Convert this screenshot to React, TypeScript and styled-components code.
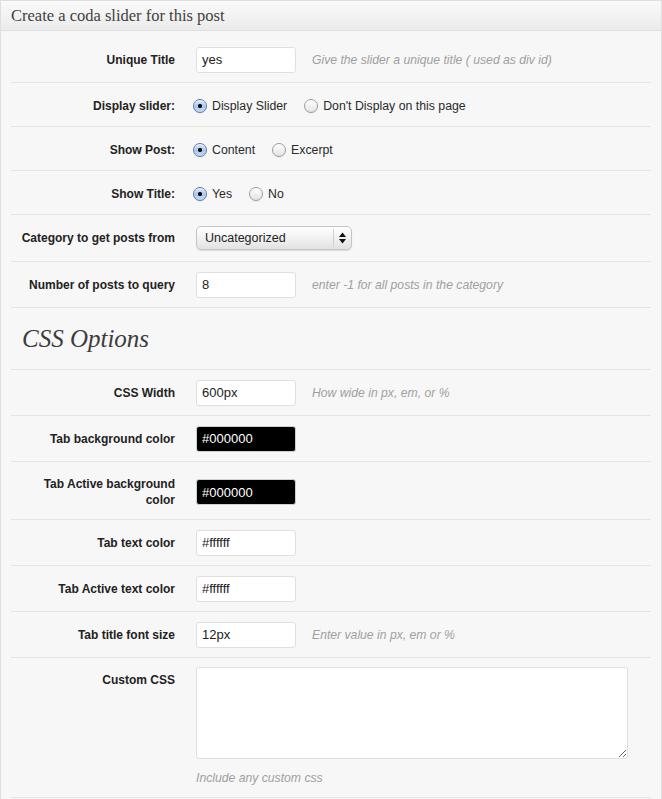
import React from 'react';
import styled, { createGlobalStyle } from 'styled-components';

const Global = createGlobalStyle`
  html, body { margin: 0; padding: 0; background: #fff; }
  body {
    font-family: "Liberation Sans", Arial, Helvetica, sans-serif;
    font-size: 12px;
    color: #333;
  }
  * { box-sizing: border-box; }
`;

const Panel = styled.div`
  width: 662px;
  border: 1px solid #dfdfdf;
  border-bottom: none;
  background: #f7f7f7;
`;

const Header = styled.div`
  height: 30px;
  padding: 5px 10px 0;
  background: linear-gradient(to bottom, #fafafa, #ebebeb);
  border-bottom: 1px solid #dfdfdf;
  font: 16.5px/20px "Liberation Serif", Georgia, "Times New Roman", serif;
  color: #3f3f3f;
`;

const Body = styled.div`
  padding: 6px 10px 20px 10px;
`;

const Row = styled.div<{ $h: number; $top?: boolean; $shift?: number }>`
  display: grid;
  grid-template-columns: 185px 1fr;
  align-items: ${(p) => (p.$top ? 'start' : 'center')};
  min-height: ${(p) => p.$h}px;
  padding-top: ${(p) => p.$shift ?? 0}px;
  border-bottom: 1px solid #e4e4e4;
`;

const Label = styled.div<{ $top?: boolean }>`
  padding: ${(p) => (p.$top ? '14px' : '0')} 21px 0 6px;
  text-align: right;
  font-weight: bold;
  font-size: 12px;
  line-height: 16px;
  color: #222;
`;

const Field = styled.div<{ $stack?: boolean }>`
  display: flex;
  flex-direction: ${(p) => (p.$stack ? 'column' : 'row')};
  align-items: ${(p) => (p.$stack ? 'flex-start' : 'center')};
  padding: ${(p) => (p.$stack ? '9px 0 11px' : '0')};
  min-width: 0;
`;

const TextInput = styled.input<{ $dark?: boolean }>`
  width: 100px;
  height: 26px;
  padding: 0 5px;
  margin: 0;
  border: 1px solid ${(p) => (p.$dark ? '#cfcfcf' : '#dfdfdf')};
  border-radius: 3px;
  background: ${(p) => (p.$dark ? '#000' : '#fff')};
  color: ${(p) => (p.$dark ? '#fff' : '#222')};
  font: 13px "Liberation Sans", Arial, sans-serif;
  outline: none;
`;

const Hint = styled.span<{ $block?: boolean }>`
  margin: ${(p) => (p.$block ? '11px 0 0 0' : '0 0 0 16px')};
  font-style: italic;
  font-size: 12.2px;
  line-height: 16px;
  color: #a0a0a0;
`;

const RadioGroup = styled.div`
  display: flex;
  align-items: center;
  gap: 17px;
  margin-left: -3px;
`;

const RadioItem = styled.label`
  display: inline-flex;
  align-items: center;
  gap: 5px;
  font-size: 12.3px;
  color: #2a2a2a;
`;

const Radio = styled.input.attrs({ type: 'radio' })`
  appearance: none;
  -webkit-appearance: none;
  margin: 0;
  width: 14px;
  height: 14px;
  border-radius: 50%;
  border: 1px solid #9c9c9c;
  background: linear-gradient(to bottom, #ffffff, #e3e3e3);
  box-shadow: inset 0 1px 1px rgba(255, 255, 255, 0.8), 0 1px 0 rgba(0, 0, 0, 0.05);
  &:checked {
    border-color: #5b79a6;
    background:
      radial-gradient(circle at 50% 50%, #111 0 1.8px, transparent 2.4px),
      linear-gradient(to bottom, #dbe8fa, #a8c6ef 55%, #c9def8);
  }
`;

const SelectWrap = styled.div`
  position: relative;
  width: 156px;
  height: 24px;
`;

const Select = styled.select`
  appearance: none;
  -webkit-appearance: none;
  width: 100%;
  height: 100%;
  margin: 0;
  padding: 0 24px 0 8px;
  border: 1px solid #c6c6c6;
  border-radius: 5px;
  background: linear-gradient(to bottom, #ffffff, #f3f3f3 45%, #e2e2e2);
  box-shadow: 0 1px 1px rgba(0, 0, 0, 0.12);
  font: 12.5px "Liberation Sans", Arial, sans-serif;
  color: #222;
  outline: none;
`;

const ArrowCell = styled.span`
  position: absolute;
  top: 3px;
  bottom: 3px;
  right: 1px;
  width: 18px;
  border-left: 1px solid #cfcfcf;
  display: flex;
  align-items: center;
  justify-content: center;
  pointer-events: none;
`;

const SectionHeading = styled.h3`
  margin: 0;
  min-height: 62px;
  display: flex;
  align-items: center;
  padding-left: 11px;
  font: italic 25px/30px "Liberation Serif", Georgia, "Times New Roman", serif;
  font-weight: normal;
  color: #3c3c3c;
  border-bottom: 1px solid #e4e4e4;
`;

const TextArea = styled.textarea`
  width: 432px;
  height: 92px;
  margin: 0;
  padding: 4px 6px;
  border: 1px solid #dfdfdf;
  border-radius: 3px;
  background: #fff;
  font: 13px "Liberation Sans", Arial, sans-serif;
  outline: none;
`;

type TextRowProps = { label: string; value: string; hint?: string; dark?: boolean; h?: number; shift?: number };

const TextRow = ({ label, value, hint, dark, h = 46, shift }: TextRowProps) => (
  <Row $h={h} $shift={shift}>
    <Label>{label}</Label>
    <Field>
      <TextInput $dark={dark} defaultValue={value} />
      {hint && <Hint>{hint}</Hint>}
    </Field>
  </Row>
);

type RadioRowProps = { label: string; name: string; options: string[] };

const RadioRow = ({ label, name, options }: RadioRowProps) => (
  <Row $h={44} $shift={3}>
    <Label>{label}</Label>
    <Field>
      <RadioGroup>
        {options.map((o, i) => (
          <RadioItem key={o}>
            <Radio name={name} defaultChecked={i === 0} />
            {o}
          </RadioItem>
        ))}
      </RadioGroup>
    </Field>
  </Row>
);

export default function App() {
  return (
    <>
      <Global />
      <Panel>
        <Header>Create a coda slider for this post</Header>
        <Body>
          <TextRow label="Unique Title" value="yes" hint="Give the slider a unique title ( used as div id)" />
          <RadioRow label="Display slider:" name="display" options={['Display Slider', "Don't Display on this page"]} />
          <RadioRow label="Show Post:" name="post" options={['Content', 'Excerpt']} />
          <RadioRow label="Show Title:" name="title" options={['Yes', 'No']} />
          <Row $h={47}>
            <Label>Category to get posts from</Label>
            <Field>
              <SelectWrap>
                <Select defaultValue="Uncategorized">
                  <option>Uncategorized</option>
                </Select>
                <ArrowCell>
                  <svg width="7" height="12" viewBox="0 0 7 12">
                    <polygon points="0,5 3.5,0.5 7,5" fill="#111" />
                    <polygon points="0,7 3.5,11.5 7,7" fill="#111" />
                  </svg>
                </ArrowCell>
              </SelectWrap>
            </Field>
          </Row>
          <TextRow label="Number of posts to query" value="8" hint="enter -1 for all posts in the category" />
          <SectionHeading>CSS Options</SectionHeading>
          <TextRow label="CSS Width" value="600px" hint="How wide in px, em, or %" />
          <TextRow label="Tab background color" value="#000000" dark />
          <TextRow label="Tab Active background color" value="#000000" dark h={58} shift={3} />
          <TextRow label="Tab text color" value="#ffffff" />
          <TextRow label="Tab Active text color" value="#ffffff" />
          <TextRow label="Tab title font size" value="12px" hint="Enter value in px, em or %" />
          <Row $h={140} $top>
            <Label $top>Custom CSS</Label>
            <Field $stack>
              <TextArea />
              <Hint $block>Include any custom css</Hint>
            </Field>
          </Row>
        </Body>
      </Panel>
    </>
  );
}
